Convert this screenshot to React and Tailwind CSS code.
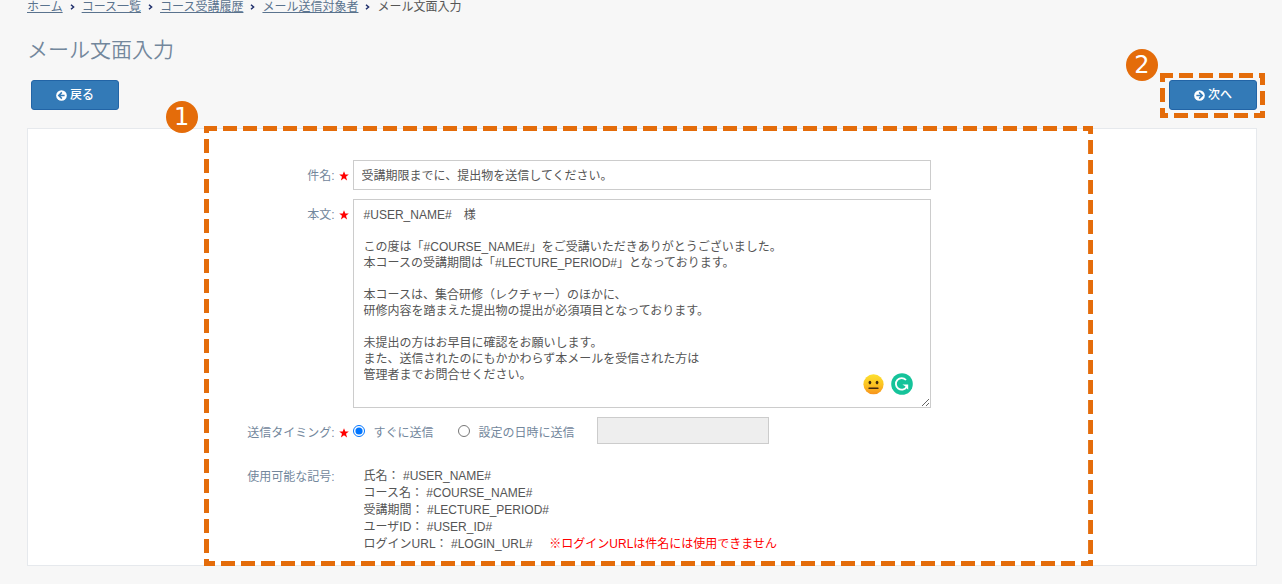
import React from "react";

const crumbs = ["ホーム", "コース一覧", "コース受講履歴", "メール送信対象者"];

const bodyText = `#USER_NAME#　様

この度は「#COURSE_NAME#」をご受講いただきありがとうございました。
本コースの受講期間は「#LECTURE_PERIOD#」となっております。

本コースは、集合研修（レクチャー）のほかに、
研修内容を踏まえた提出物の提出が必須項目となっております。

未提出の方はお早目に確認をお願いします。
また、送信されたのにもかかわらず本メールを受信された方は
管理者までお問合せください。`;

const symbols = [
  ["氏名", "#USER_NAME#"],
  ["コース名", "#COURSE_NAME#"],
  ["受講期間", "#LECTURE_PERIOD#"],
  ["ユーザID", "#USER_ID#"],
  ["ログインURL", "#LOGIN_URL#"],
];

function ArrowCircle({ left }) {
  return (
    <svg viewBox="0 0 12 12" className={left ? "size-[11px]" : "size-[11px] rotate-180"} aria-hidden="true">
      <circle cx="6" cy="6" r="5.8" fill="#fff" />
      <path d="M6.4 2.6 3 6l3.4 3.4M3.4 6h6" fill="none" stroke="#337ab7" strokeWidth="1.7" />
    </svg>
  );
}

function Star() {
  return (
    <svg viewBox="0 0 20 20" className="size-[10px]" aria-hidden="true">
      <path d="M10 0.5 12.6 7h7l-5.6 4.4L16.2 19 10 14.5 3.8 19 6 11.4 0.4 7h7z" fill="#f00" />
    </svg>
  );
}

function Crumb() {
  return (
    <svg viewBox="0 0 5 6" className="mx-[7px] h-[6px] w-[5px]" aria-hidden="true">
      <path d="M1 0.7 3.6 3 1 5.3" fill="none" stroke="#1f2f6b" strokeWidth="1.5" />
    </svg>
  );
}

function DashedFrame({ offsets, className }) {
  const [top, right, bottom, left] = offsets;
  const dash = { stroke: "#e46c0a", strokeDasharray: "14 6" };
  return (
    <div className={`pointer-events-none absolute ${className}`} aria-hidden="true">
      <svg className="block h-full w-full">
        <line x1="0" y1="0" x2="100%" y2="0" strokeWidth="10" strokeDashoffset={top} {...dash} />
        <line x1="100%" y1="0" x2="100%" y2="100%" strokeWidth="10" strokeDashoffset={right} {...dash} />
        <line x1="0" y1="100%" x2="100%" y2="100%" strokeWidth="10" strokeDashoffset={bottom} {...dash} />
        <line x1="0" y1="0" x2="0" y2="100%" strokeWidth="10" strokeDashoffset={left} {...dash} />
      </svg>
    </div>
  );
}

function Badge({ children, className }) {
  return (
    <span
      className={`absolute flex size-8 items-center justify-center rounded-full bg-[#e46c0a] font-["DejaVu_Sans",sans-serif] text-[24px] leading-8 text-white ${className}`}
    >
      {children}
    </span>
  );
}

const buttonClass =
  "flex h-[30px] w-[88px] items-center justify-center gap-[3px] rounded-[3px] border border-[#2264a6] bg-[#337ab7] text-[12px] font-medium text-white";
const labelClass = "text-right text-[#73879c]";

export default function App() {
  return (
    <div className='min-h-screen bg-[#f7f7f7] pr-[25px] pb-[18px] pl-[27px] font-["Liberation_Sans","Noto_Sans_CJK_JP",sans-serif] text-[12px] leading-4 text-[#555]'>
      <nav className="flex items-center leading-[14px]" aria-label="パンくず">
        {crumbs.map((c) => (
          <React.Fragment key={c}>
            <a href="#" className="text-[#5a738e] underline">
              {c}
            </a>
            <Crumb />
          </React.Fragment>
        ))}
        <span>メール文面入力</span>
      </nav>

      <h1 className="mt-[21px] text-[21px] leading-[30px] font-[350] text-[#73879c]">メール文面入力</h1>

      <div className="mt-[15px] flex justify-between pl-1">
        <button type="button" className={buttonClass}>
          <ArrowCircle left />
          戻る
        </button>
        <div className="relative">
          <button type="button" className={buttonClass}>
            <ArrowCircle />
            次へ
          </button>
          <DashedFrame className="-top-[7px] -right-2 -bottom-2 -left-[9px]" offsets={[1, 2, 6, 5]} />
          <Badge className="-top-[31px] -left-[43px]">2</Badge>
        </div>
      </div>

      <main className="mt-[18px] border border-[#e6e9ed] bg-white">
        <form className="relative mr-[13.3%] ml-[14.3%] grid grid-cols-[131px_18px_minmax(0,1fr)] pt-[31px] pr-[162px] pb-[12px]">
          <DashedFrame className="-top-[3px] right-0 -bottom-px left-0" offsets={[1, 6, 3, 7]} />
          <Badge className="-top-[28px] -left-[38px]">1</Badge>

          <label htmlFor="subject" className={`${labelClass} pt-2`}>
            件名:
          </label>
          <span className="flex justify-center pt-[11px]">
            <Star />
          </span>
          <input
            id="subject"
            defaultValue="受講期限までに、提出物を送信してください。"
            className="h-[30px] w-full border border-[#ccc] px-2 pb-[2px]"
          />

          <label htmlFor="body" className={`${labelClass} pt-[17px]`}>
            本文:
          </label>
          <span className="flex justify-center pt-[20px]">
            <Star />
          </span>
          <div className="relative mt-[9px]">
            <textarea
              id="body"
              defaultValue={bodyText}
              className="block h-[209px] w-full resize overflow-hidden border border-[#ccc] px-[10px] py-[7px]"
            />
            <div className="absolute right-[18px] bottom-[13px] flex items-center gap-[7px]">
              <svg viewBox="0 0 20 20" className="size-[21px]" aria-hidden="true">
                <defs>
                  <linearGradient id="face" x1="0" y1="0" x2="0" y2="1">
                    <stop offset="0" stopColor="#fde030" />
                    <stop offset="0.5" stopColor="#fcc521" />
                    <stop offset="1" stopColor="#f7931e" />
                  </linearGradient>
                </defs>
                <circle cx="10" cy="9.8" r="9.6" fill="url(#face)" />
                <ellipse cx="6.6" cy="8.2" rx="1.3" ry="1.7" fill="#422b0d" />
                <ellipse cx="13.4" cy="8.2" rx="1.3" ry="1.7" fill="#422b0d" />
                <path d="M5.8 13.6h8.4" stroke="#422b0d" strokeWidth="1.5" strokeLinecap="round" />
              </svg>
              <svg viewBox="0 0 22 22" className="size-[22px]" aria-hidden="true">
                <circle cx="11" cy="11" r="10.8" fill="#15c39a" />
                <path d="M15 7A5.8 5.8 0 1 0 15.6 14" fill="none" stroke="#fff" strokeWidth="1.8" />
                <path d="M11.4 11.5h5.8v5.2l-1.8-1.8-1.2-1.6z" fill="#fff" />
              </svg>
            </div>
          </div>

          <span id="timing" className={`${labelClass} pt-[17px]`}>
            送信タイミング:
          </span>
          <span className="flex justify-center pt-[20px]">
            <Star />
          </span>
          <div role="radiogroup" aria-labelledby="timing" className="mt-[9px] flex h-[27px] items-center text-[#73879c]">
            <input id="now" type="radio" name="timing" defaultChecked className="size-3" />
            <label htmlFor="now" className="ml-[9px] pt-[5px]">
              すぐに送信
            </label>
            <input id="later" type="radio" name="timing" className="ml-6 size-3" />
            <label htmlFor="later" className="ml-[9px] pt-[5px]">
              設定の日時に送信
            </label>
            <input
              type="text"
              disabled
              aria-label="送信日時"
              className="ml-[22px] h-[27px] w-[172px] border border-[#ccc] bg-[#eee]"
            />
          </div>

          <span className={`${labelClass} pt-[25px]`}>使用可能な記号:</span>
          <span />
          <ul className="pt-[24px] pl-[11px] leading-[17px]">
            {symbols.map(([name, code]) => (
              <li key={name}>
                {name}： {code}
                {code === "#LOGIN_URL#" && (
                  <span className="ml-[17px] text-[#f00]">※ログインURLは件名には使用できません</span>
                )}
              </li>
            ))}
          </ul>
        </form>
      </main>
    </div>
  );
}
